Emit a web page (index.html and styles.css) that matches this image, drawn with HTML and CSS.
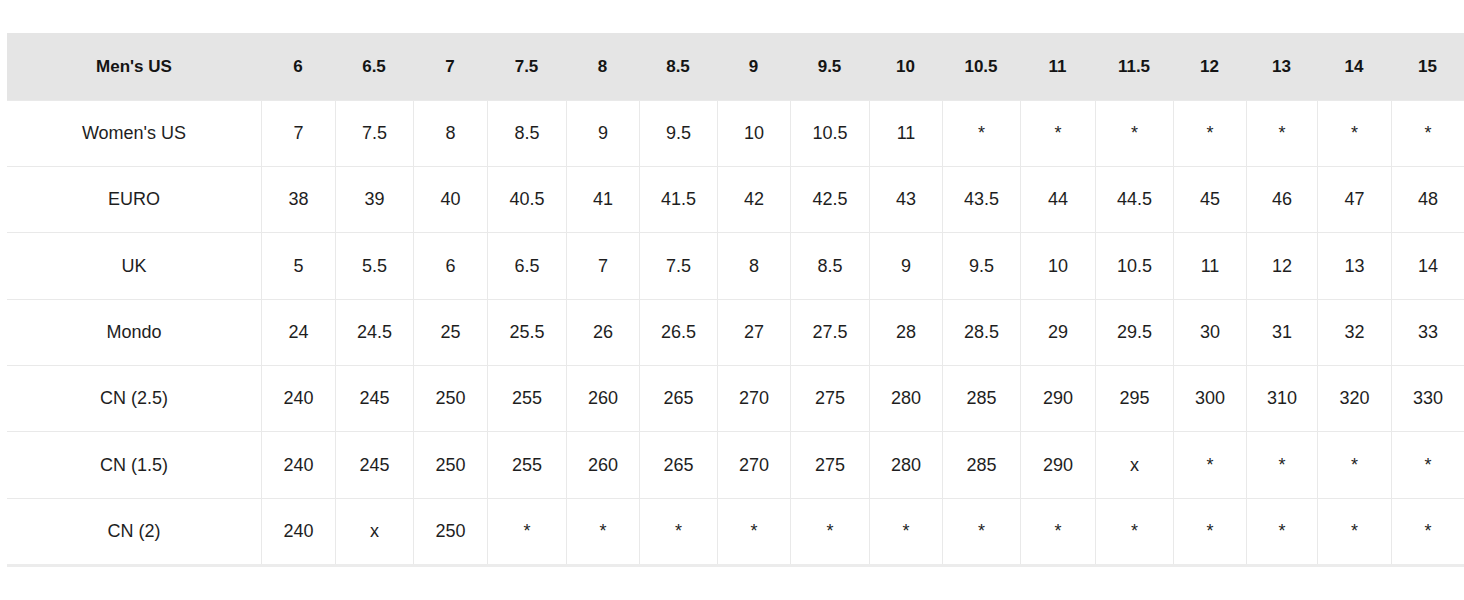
FILE: index.html
```html
<!DOCTYPE html>
<html lang="en">
<head>
<meta charset="utf-8">
<title>Size Chart</title>
<link rel="stylesheet" href="styles.css">
</head>
<body>
<table class="size-table">
  <colgroup>
    <col class="col-label">
    <col class="w74"><col class="w78"><col class="w74"><col class="w79"><col class="w73"><col class="w78"><col class="w73"><col class="w79"><col class="w73"><col class="w78"><col class="w75"><col class="w78"><col class="w73"><col class="w71"><col class="w74"><col class="w73">
  </colgroup>
  <thead>
    <tr>
      <th>Men's US</th><th>6</th><th>6.5</th><th>7</th><th>7.5</th><th>8</th><th>8.5</th><th>9</th><th>9.5</th><th>10</th><th>10.5</th><th>11</th><th>11.5</th><th>12</th><th>13</th><th>14</th><th>15</th>
    </tr>
  </thead>
  <tbody>
    <tr><td>Women's US</td><td>7</td><td>7.5</td><td>8</td><td>8.5</td><td>9</td><td>9.5</td><td>10</td><td>10.5</td><td>11</td><td>*</td><td>*</td><td>*</td><td>*</td><td>*</td><td>*</td><td>*</td></tr>
    <tr><td>EURO</td><td>38</td><td>39</td><td>40</td><td>40.5</td><td>41</td><td>41.5</td><td>42</td><td>42.5</td><td>43</td><td>43.5</td><td>44</td><td>44.5</td><td>45</td><td>46</td><td>47</td><td>48</td></tr>
    <tr><td>UK</td><td>5</td><td>5.5</td><td>6</td><td>6.5</td><td>7</td><td>7.5</td><td>8</td><td>8.5</td><td>9</td><td>9.5</td><td>10</td><td>10.5</td><td>11</td><td>12</td><td>13</td><td>14</td></tr>
    <tr><td>Mondo</td><td>24</td><td>24.5</td><td>25</td><td>25.5</td><td>26</td><td>26.5</td><td>27</td><td>27.5</td><td>28</td><td>28.5</td><td>29</td><td>29.5</td><td>30</td><td>31</td><td>32</td><td>33</td></tr>
    <tr><td>CN (2.5)</td><td>240</td><td>245</td><td>250</td><td>255</td><td>260</td><td>265</td><td>270</td><td>275</td><td>280</td><td>285</td><td>290</td><td>295</td><td>300</td><td>310</td><td>320</td><td>330</td></tr>
    <tr><td>CN (1.5)</td><td>240</td><td>245</td><td>250</td><td>255</td><td>260</td><td>265</td><td>270</td><td>275</td><td>280</td><td>285</td><td>290</td><td>x</td><td>*</td><td>*</td><td>*</td><td>*</td></tr>
    <tr><td>CN (2)</td><td>240</td><td>x</td><td>250</td><td>*</td><td>*</td><td>*</td><td>*</td><td>*</td><td>*</td><td>*</td><td>*</td><td>*</td><td>*</td><td>*</td><td>*</td><td>*</td></tr>
  </tbody>
</table>
</body>
</html>
```

FILE: styles.css
```css
html, body {
  margin: 0;
  padding: 0;
  background: #ffffff;
}

body {
  font-family: "Liberation Sans", Arial, sans-serif;
  color: #1e1e1e;
}

.size-table {
  margin: 33px 0 0 7px;
  width: 1457px;
  table-layout: fixed;
  border-collapse: separate;
  border-spacing: 0;
  border-bottom: 3px solid #ececec;
}

.col-label { width: 254px; }
.w71 { width: 71px; }
.w73 { width: 73px; }
.w74 { width: 74px; }
.w75 { width: 75px; }
.w78 { width: 78px; }
.w79 { width: 79px; }

.size-table th {
  background: #e5e5e5;
  height: 67px;
  padding: 0;
  font-size: 17px;
  font-weight: bold;
  text-align: center;
  vertical-align: middle;
  color: #141414;
}

.size-table td {
  box-sizing: border-box;
  height: 66px;
  padding: 0;
  font-size: 18px;
  text-align: center;
  vertical-align: middle;
  border-top: 1px solid #e9e9e9;
  border-left: 1px solid #e9e9e9;
}

.size-table tbody tr:nth-child(3n) td {
  height: 67px;
}

.size-table td:first-child {
  border-left: none;
}
```
